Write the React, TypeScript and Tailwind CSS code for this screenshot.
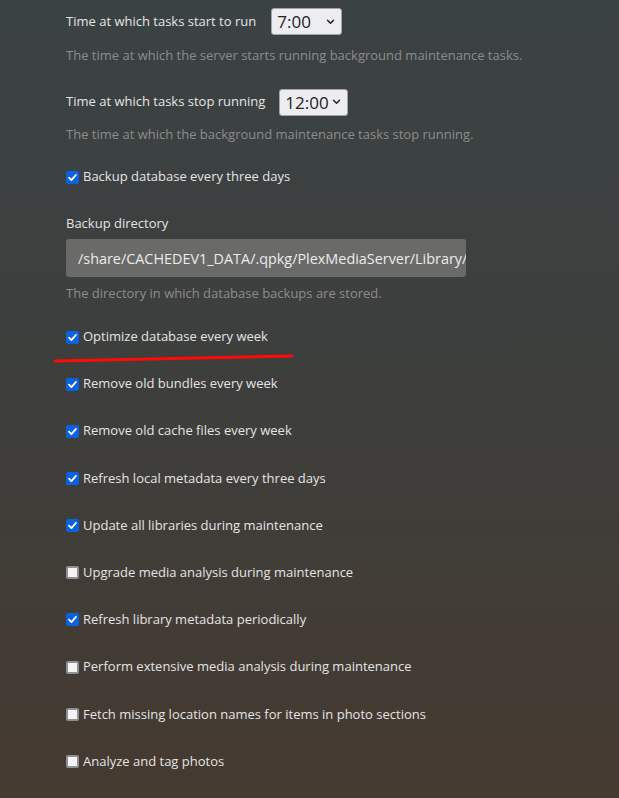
import React from "react";

const Check = ({ checked }: { checked: boolean }) =>
  checked ? (
    <span className="flex h-[13px] w-[13px] shrink-0 items-center justify-center rounded-[2px] bg-[#0b62e0]">
      <svg width="11" height="11" viewBox="0 0 12 12">
        <path d="M2.2 6.2 L4.8 8.8 L9.8 3.2" fill="none" stroke="#fff" strokeWidth="2" strokeLinecap="round" strokeLinejoin="round" />
      </svg>
    </span>
  ) : (
    <span className="block h-[13px] w-[13px] shrink-0 rounded-[2px] border-2 border-[#8f8f96] bg-[#f4f4f6]" />
  );

const Row = ({ checked, label }: { checked: boolean; label: string }) => (
  <div className="flex h-[22px] items-center gap-[4px]">
    <Check checked={checked} />
    <span>{label}</span>
  </div>
);

const Select = ({ value, w }: { value: string; w: string }) => (
  <div className={`flex h-[27px] items-center justify-between rounded-[3px] border border-[#a3a3a8] bg-[#ededf1] pl-[5px] pr-[6px] text-[17px] text-[#222] ${w}`}>
    <span className="leading-none">{value}</span>
    <svg width="9" height="6" viewBox="0 0 10 7">
      <path d="M1.5 1.5 L5 5 L8.5 1.5" fill="none" stroke="#222" strokeWidth="1.7" strokeLinecap="round" strokeLinejoin="round" />
    </svg>
  </div>
);

export default function App() {
  const rows: [boolean, string][] = [
    [true, "Remove old bundles every week"],
    [true, "Remove old cache files every week"],
    [true, "Refresh local metadata every three days"],
    [true, "Update all libraries during maintenance"],
    [false, "Upgrade media analysis during maintenance"],
    [true, "Refresh library metadata periodically"],
    [false, "Perform extensive media analysis during maintenance"],
    [false, "Fetch missing location names for items in photo sections"],
    [false, "Analyze and tag photos"],
  ];
  return (
    <div
      className="relative h-[798px] w-[619px] overflow-hidden bg-[linear-gradient(180deg,#3b4244_0%,#3d3f3d_45%,#453a30_100%)] pl-[66px] text-[13px] text-[#e4e4e4]"
      style={{ fontFamily: '"Open Sans", "Noto Sans", sans-serif' }}
    >
      <div className="flex flex-col">
        <div className="mt-[8px] flex h-[27px] items-center gap-[15px]">
          <span>Time at which tasks start to run</span>
          <Select value="7:00" w="w-[71px]" />
        </div>
        <div className="mt-[10px] h-[20px] leading-[20px] text-[#8c8c8c]">
          The time at which the server starts running background maintenance tasks.
        </div>
        <div className="mt-[23px] flex h-[28px] items-center gap-[14px]">
          <span>Time at which tasks stop running</span>
          <Select value="12:00" w="w-[69px]" />
        </div>
        <div className="mt-[8px] h-[20px] leading-[20px] text-[#8c8c8c]">
          The time at which the background maintenance tasks stop running.
        </div>
        <div className="mt-[22px]">
          <Row checked label="Backup database every three days" />
        </div>
        <div className="mt-[25px] h-[20px] leading-[20px]">Backup directory</div>
        <input
          readOnly
          value="/share/CACHEDEV1_DATA/.qpkg/PlexMediaServer/Library/Plex Media Server/Backups"
          className="mt-[6px] h-[38px] w-[400px] rounded-[3px] bg-[#6a6a69] pl-[12px] text-[14.4px] text-[#ececec] outline-none"
        />
        <div className="mt-[6px] h-[20px] leading-[20px] text-[#8c8c8c]">
          The directory in which database backups are stored.
        </div>
        <div className="mt-[23px]">
          <Row checked label="Optimize database every week" />
        </div>
        <div className="mt-[25px] flex flex-col gap-[25.2px]">
          {rows.map(([c, l]) => (
            <Row key={l} checked={c} label={l} />
          ))}
        </div>
      </div>
      <svg className="pointer-events-none absolute left-[50px] top-[350px]" width="250" height="16" viewBox="0 0 250 16">
        <path d="M5 11 C 80 9.5, 160 8, 242 6" fill="none" stroke="#ff0a0a" strokeWidth="3" strokeLinecap="round" />
      </svg>
    </div>
  );
}
